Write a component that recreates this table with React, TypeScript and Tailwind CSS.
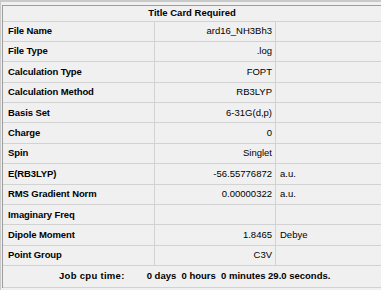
import React from "react";

interface Row {
  label: string;
  value: string;
  unit?: string;
}

const rows: Row[] = [
  { label: "File Name", value: "ard16_NH3Bh3" },
  { label: "File Type", value: ".log" },
  { label: "Calculation Type", value: "FOPT" },
  { label: "Calculation Method", value: "RB3LYP" },
  { label: "Basis Set", value: "6-31G(d,p)" },
  { label: "Charge", value: "0" },
  { label: "Spin", value: "Singlet" },
  { label: "E(RB3LYP)", value: "-56.55776872", unit: "a.u." },
  { label: "RMS Gradient Norm", value: "0.00000322", unit: "a.u." },
  { label: "Imaginary Freq", value: "" },
  { label: "Dipole Moment", value: "1.8465", unit: "Debye" },
  { label: "Point Group", value: "C3V" },
];

export default function App() {
  return (
    <div className="w-[381px] h-[290px] overflow-hidden bg-[#f0f0f0] border-t-2 border-l border-[#c9c9c9] font-['Liberation_Sans',Arial,sans-serif] text-[9.5px] text-black">
      <div className="mt-[3px] ml-px border-l border-t border-[#9d9d9d]">
        <div className="h-[15.5px] flex items-center justify-center font-bold border-b border-[#d2d2d2]">
          Title Card Required
        </div>
        {rows.map((r) => (
          <div
            key={r.label}
            className="h-[20.4px] flex items-center border-b border-[#d2d2d2]"
          >
            <div className="w-[152px] h-full flex items-center pl-[5px] font-bold tracking-[-0.1px] border-r border-[#d2d2d2]">
              {r.label}
            </div>
            <div className="w-[121px] h-full flex items-center justify-end pr-[3px] border-r border-[#d2d2d2]">
              {r.value}
            </div>
            <div className="pl-[4px]">{r.unit}</div>
          </div>
        ))}
        <div className="h-[21.5px] flex items-center font-bold border-b border-[#d2d2d2]">
          <span className="ml-[56px] tracking-[0.3px]">Job cpu time:</span>
          <span className="ml-[22px] whitespace-pre">
            0 days  0 hours  0 minutes 29.0 seconds.
          </span>
        </div>
      </div>
    </div>
  );
}
